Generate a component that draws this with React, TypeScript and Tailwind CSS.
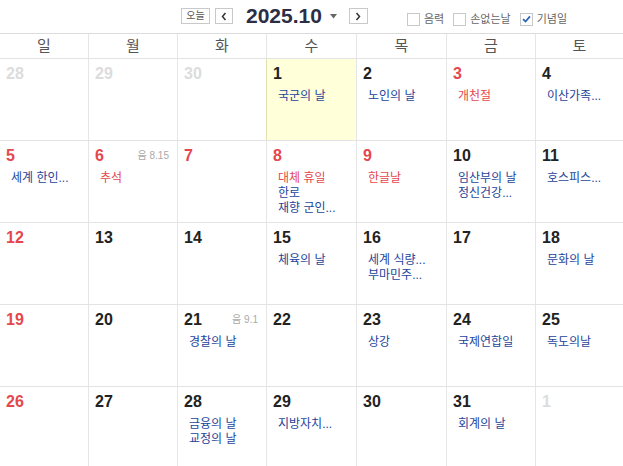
import React from "react";

type Ev = { t: string; red?: boolean };
type Cell = { d: number; gray?: boolean; red?: boolean; today?: boolean; lunar?: string; ev?: Ev[] };

const rows: Cell[][] = [
  [
    { d: 28, gray: true },
    { d: 29, gray: true },
    { d: 30, gray: true },
    { d: 1, today: true, ev: [{ t: "국군의 날" }] },
    { d: 2, ev: [{ t: "노인의 날" }] },
    { d: 3, red: true, ev: [{ t: "개천절", red: true }] },
    { d: 4, ev: [{ t: "이산가족..." }] },
  ],
  [
    { d: 5, red: true, ev: [{ t: "세계 한인..." }] },
    { d: 6, red: true, lunar: "음 8.15", ev: [{ t: "추석", red: true }] },
    { d: 7, red: true },
    { d: 8, red: true, ev: [{ t: "대체 휴일", red: true }, { t: "한로" }, { t: "재향 군인..." }] },
    { d: 9, red: true, ev: [{ t: "한글날", red: true }] },
    { d: 10, ev: [{ t: "임산부의 날" }, { t: "정신건강..." }] },
    { d: 11, ev: [{ t: "호스피스..." }] },
  ],
  [
    { d: 12, red: true },
    { d: 13 },
    { d: 14 },
    { d: 15, ev: [{ t: "체육의 날" }] },
    { d: 16, ev: [{ t: "세계 식량..." }, { t: "부마민주..." }] },
    { d: 17 },
    { d: 18, ev: [{ t: "문화의 날" }] },
  ],
  [
    { d: 19, red: true },
    { d: 20 },
    { d: 21, lunar: "음 9.1", ev: [{ t: "경찰의 날" }] },
    { d: 22 },
    { d: 23, ev: [{ t: "상강" }] },
    { d: 24, ev: [{ t: "국제연합일" }] },
    { d: 25, ev: [{ t: "독도의날" }] },
  ],
  [
    { d: 26, red: true },
    { d: 27 },
    { d: 28, ev: [{ t: "금융의 날" }, { t: "교정의 날" }] },
    { d: 29, ev: [{ t: "지방자치..." }] },
    { d: 30 },
    { d: 31, ev: [{ t: "회계의 날" }] },
    { d: 1, gray: true },
  ],
];

const days = ["일", "월", "화", "수", "목", "금", "토"];
const font = { fontFamily: '"Liberation Sans", "Noto Sans CJK KR", sans-serif' };

function Box({ checked }: { checked?: boolean }) {
  return (
    <span className="w-[13px] h-[13px] border border-[#c8c8c8] bg-white flex items-center justify-center">
      {checked && (
        <svg width="9" height="8" viewBox="0 0 9 8">
          <path d="M1 4.2 L3.5 6.5 L8 1.3" fill="none" stroke="#2f66b3" strokeWidth="1.8" />
        </svg>
      )}
    </span>
  );
}

export default function App() {
  return (
    <div className="w-[623px] h-[466px] overflow-hidden bg-white" style={font}>
      {/* header */}
      <div className="h-[34px] border-b border-[#dcdcdc] relative flex items-center">
        <div className="absolute left-[181px] top-[8px] flex items-center">
          <div className="w-[29px] h-[16px] border border-[#c9c9c9] text-[10px] leading-[14px] text-[#555] flex items-center justify-center">오늘</div>
          <div className="ml-[5px] w-[18px] h-[16px] border border-[#c9c9c9] flex items-center justify-center">
            <svg width="6" height="9" viewBox="0 0 6 9"><path d="M4.5 1 L1.5 4.5 L4.5 8" fill="none" stroke="#333" strokeWidth="1.5" /></svg>
          </div>
          <div className="ml-[13px] text-[21px] leading-[16px] font-bold text-[#2b2e45] tracking-[0px]">2025.10</div>
          <svg className="ml-[8px]" width="7" height="5" viewBox="0 0 7 5"><path d="M0 0 L7 0 L3.5 4.5 Z" fill="#666" /></svg>
          <div className="ml-[12px] w-[19px] h-[16px] border border-[#c9c9c9] flex items-center justify-center">
            <svg width="6" height="9" viewBox="0 0 6 9"><path d="M1.5 1 L4.5 4.5 L1.5 8" fill="none" stroke="#333" strokeWidth="1.5" /></svg>
          </div>
        </div>
        <div className="absolute left-[407px] top-[12px] flex items-center text-[11px] leading-[14px] text-[#666]">
          <Box />
          <span className="ml-[4px]">음력</span>
          <span className="ml-[9px]"><Box /></span>
          <span className="ml-[4px]">손없는날</span>
          <span className="ml-[9px]"><Box checked /></span>
          <span className="ml-[4px]">기념일</span>
        </div>
      </div>
      {/* weekday header */}
      <div className="grid grid-cols-[88px_89px_89px_90px_90px_89px_88px] h-[25px] border-b border-[#e3e3e3]">
        {days.map((d, i) => (
          <div key={d} className={`flex items-center justify-center text-[15px] text-[#555] ${i > 0 ? "border-l border-[#e6e6e6]" : ""}`}>
            {d}
          </div>
        ))}
      </div>
      {/* grid */}
      {rows.map((row, ri) => (
        <div key={ri} className="grid grid-cols-[88px_89px_89px_90px_90px_89px_88px] h-[82px] border-b border-[#e3e3e3]">
          {row.map((c, ci) => (
            <div
              key={ci}
              className={`flex flex-col pt-[5px] ${ci > 0 ? "border-l" : ""} ${c.today ? "bg-[#ffffd9] border-[#e2e0b0]" : "border-[#e6e6e6]"}`}
            >
              <div className="flex items-center justify-between pl-[6px] pr-[8px] h-[20px]">
                <span
                  className={`text-[16px] leading-[20px] font-bold ${c.gray ? "text-[#dcdcdc]" : c.red ? "text-[#e4474d]" : "text-[#222]"}`}
                >
                  {c.d}
                </span>
                {c.lunar && <span className="text-[10px] text-[#aaa] leading-[12px]">{c.lunar}</span>}
              </div>
              {c.ev && (
                <div className="mt-[5px] pl-[11px] flex flex-col">
                  {c.ev.map((e, ei) => (
                    <span key={ei} className={`text-[12px] leading-[15px] whitespace-nowrap ${e.red ? "text-[#e4474d]" : "text-[#24449a]"}`}>
                      {e.t}
                    </span>
                  ))}
                </div>
              )}
            </div>
          ))}
        </div>
      ))}
    </div>
  );
}
